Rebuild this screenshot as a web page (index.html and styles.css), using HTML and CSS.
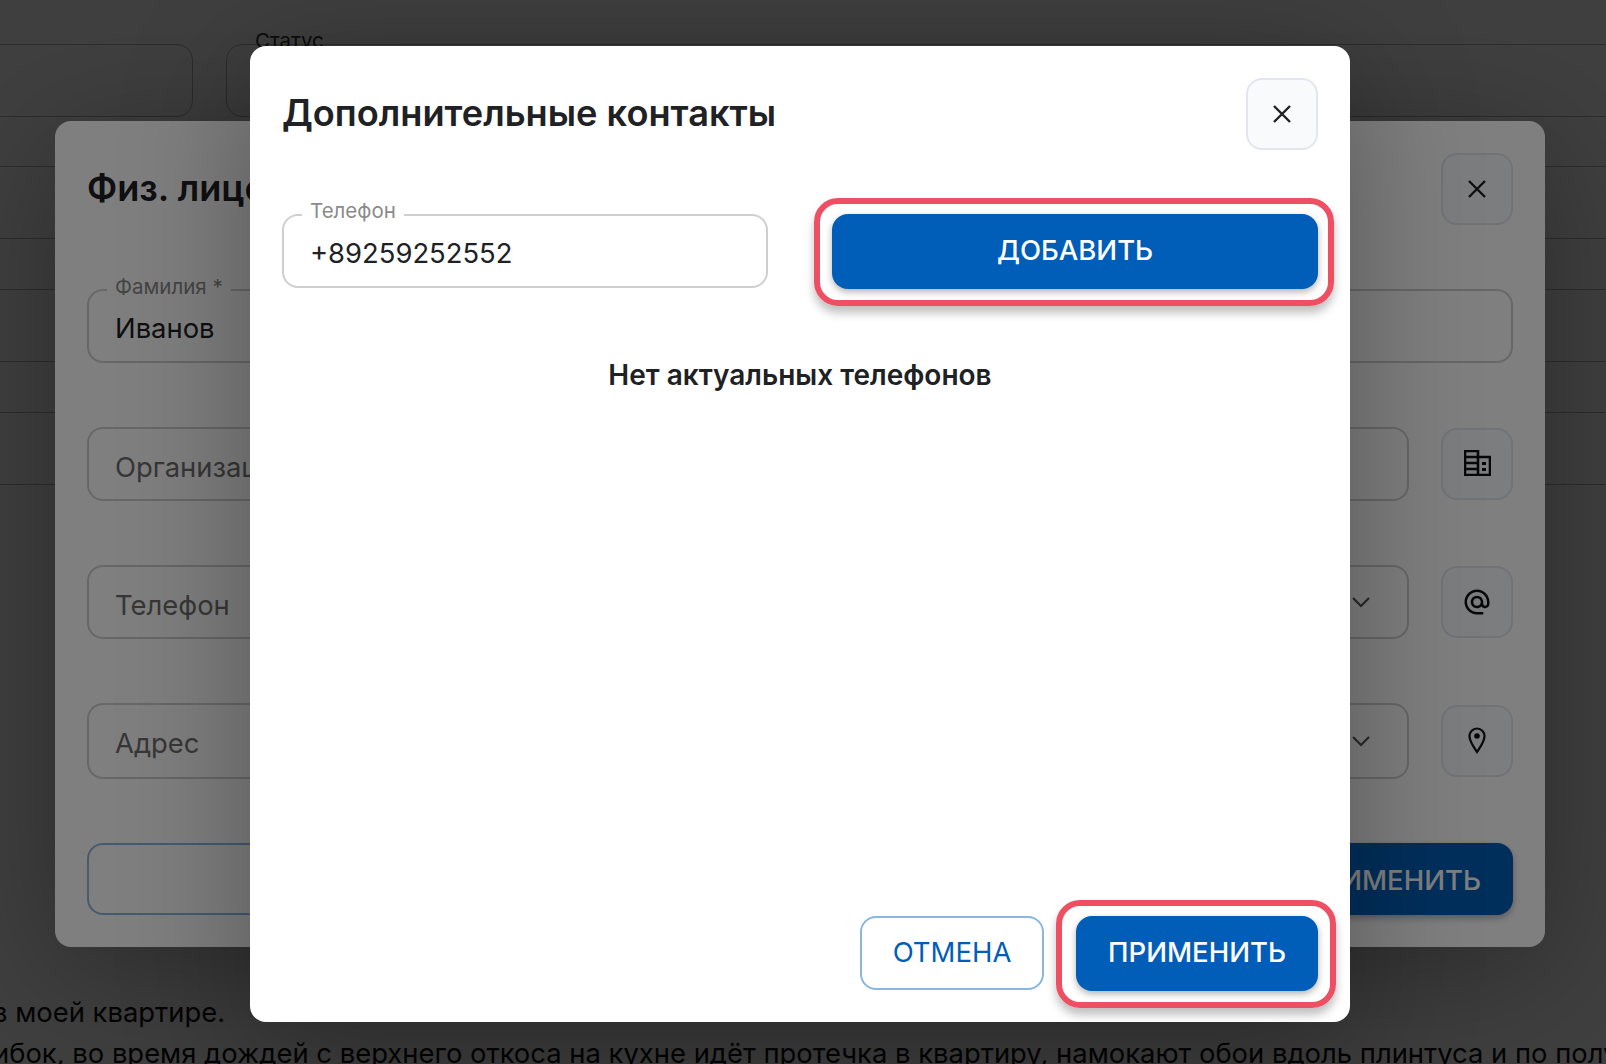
FILE: index.html
```html
<!DOCTYPE html>
<html lang="ru">
<head>
<meta charset="utf-8">
<title>Дополнительные контакты</title>
<link rel="stylesheet" href="styles.css">
</head>
<body>
<div class="page">
  <div class="page-fields">
    <div class="page-field page-field--first"></div>
    <div class="page-field page-field--status"><span class="page-label">Статус</span></div>
  </div>
  <div class="page-rows">
    <div class="page-row page-row--tall"></div>
    <div class="page-row page-row--short"></div>
    <div class="page-row page-row--tall"></div>
    <div class="page-row page-row--short"></div>
    <div class="page-row page-row--tall"></div>
    <div class="page-row page-row--mid"></div>
    <div class="page-row page-row--last"></div>
  </div>
  <div class="page-text">
    <p class="page-line page-line--one">в моей квартире.</p>
    <p class="page-line page-line--two">ибок, во время дождей с верхнего откоса на кухне идёт протечка в квартиру, намокают обои вдоль плинтуса и по полу</p>
  </div>
</div>

<div class="scrim"></div>

<section class="dialog dialog--back">
  <header class="dialog-head">
    <h2 class="dialog-title">Физ. лицо</h2>
    <button class="square-btn">
      <svg class="icon-close" viewBox="0 0 20 20"><path d="M2 2l16 16M18 2L2 18"/></svg>
    </button>
  </header>
  <div class="back-form">
    <div class="field field--solo"><span class="field-label field-label--low">Фамилия *</span><span class="field-value">Иванов</span></div>
    <div class="back-row">
      <div class="field"><span class="field-hint">Организация</span></div>
      <button class="square-btn">
        <svg class="icon-building" viewBox="0 0 27 26"><path d="M1 1h13v24H1zM14 7h12v18H14zM1 7h13M1 13h13M1 19h13"/><path class="icon-dots" d="M18 12h4v3h-4zM18 18h4v3h-4z"/></svg>
      </button>
    </div>
    <div class="back-row">
      <div class="field field--select"><span class="field-hint">Телефон</span>
        <svg class="icon-chevron" viewBox="0 0 20 12"><path d="M2 2l8 8 8-8"/></svg>
      </div>
      <button class="square-btn">
        <svg class="icon-at" viewBox="0 0 24 24"><path d="M12 2C6.48 2 2 6.48 2 12s4.48 10 10 10h5v-2h-5c-4.34 0-8-3.66-8-8s3.66-8 8-8 8 3.66 8 8v1.43c0 .79-.71 1.57-1.5 1.57s-1.5-.78-1.5-1.57V12c0-2.76-2.24-5-5-5s-5 2.24-5 5 2.24 5 5 5c1.38 0 2.64-.56 3.54-1.47.65.89 1.77 1.47 2.96 1.47 1.97 0 3.5-1.6 3.5-3.57V12c0-5.52-4.48-10-10-10zm0 13c-1.66 0-3-1.34-3-3s1.34-3 3-3 3 1.34 3 3-1.34 3-3 3z"/></svg>
      </button>
    </div>
    <div class="back-row">
      <div class="field field--select field--address"><span class="field-hint">Адрес</span>
        <svg class="icon-chevron" viewBox="0 0 20 12"><path d="M2 2l8 8 8-8"/></svg>
      </div>
      <button class="square-btn">
        <svg class="icon-pin" viewBox="0 0 18 28"><path d="M9 26C5 20 1.500 15.500 1.500 10a7.500 7.500 0 0 1 15 0C16.500 15.500 13 20 9 26z"/><circle cx="9" cy="10" r="2.800"/></svg>
      </button>
    </div>
  </div>
  <footer class="back-actions">
    <button class="btn btn--outline">ОТМЕНА</button>
    <button class="btn btn--solid btn--back-apply">ПРИМЕНИТЬ</button>
  </footer>
</section>

<div class="scrim"></div>

<section class="dialog dialog--front">
  <header class="dialog-head">
    <h2 class="dialog-title">Дополнительные контакты</h2>
    <button class="square-btn">
      <svg class="icon-close" viewBox="0 0 20 20"><path d="M2 2l16 16M18 2L2 18"/></svg>
    </button>
  </header>
  <div class="phone-row">
    <div class="field field--phone"><span class="field-label">Телефон</span><span class="field-value">+89259252552</span></div>
    <div class="callout-wrap callout-wrap--add">
      <button class="btn btn--solid btn--wide">ДОБАВИТЬ</button>
      <div class="callout callout--add"></div>
    </div>
  </div>
  <p class="empty">Нет актуальных телефонов</p>
  <footer class="front-actions">
    <button class="btn btn--outline btn--cancel">ОТМЕНА</button>
    <div class="callout-wrap">
      <button class="btn btn--solid btn--apply">ПРИМЕНИТЬ</button>
      <div class="callout callout--apply"></div>
    </div>
  </footer>
</section>
</body>
</html>
```
FILE: styles.css
```css
* { box-sizing: border-box; }
html, body { margin: 0; height: 100%; }
body {
  position: relative;
  width: 1606px;
  height: 1064px;
  overflow: hidden;
  background: #fff;
  font-family: Inter, "Noto Sans", sans-serif;
  color: #202124;
}
button { font-family: inherit; cursor: pointer; }

/* underlying page */
.page { height: 100%; padding-top: 44px; overflow: hidden; }
.page-fields { display: flex; gap: 33px; margin: 0 -60px 0 -40px; }
.page-field { position: relative; height: 73px; border: 1.5px solid #b4b4b4; border-radius: 16px; }
.page-field--first { width: 233px; }
.page-field--status { flex: 1; }
.page-label { position: absolute; left: 28px; top: -17px; font-size: 20.5px; line-height: 26px; color: #333; }
.page-rows { margin-top: 49px; }
.page-row { border-top: 1.5px solid #b4b4b4; }
.page-row--tall { height: 72px; }
.page-row--short { height: 51px; }
.page-row--mid { height: 114px; }
.page-row--last { height: 394px; border-top: none; }
.page-text { font-size: 27.4px; line-height: 41px; color: #111; white-space: nowrap; }
.page-line { margin: 0; }
.page-line--one { margin-left: -8px; }
.page-line--two { margin-left: -7px; }

.scrim { position: absolute; inset: 0; background: rgba(0, 0, 0, .5); }

/* dialogs */
.dialog {
  position: absolute;
  display: flex;
  flex-direction: column;
  background: #fff;
  border-radius: 16px;
  overflow: hidden;
  box-shadow: 0 24px 130px rgba(0, 0, 0, .32);
}
.dialog--back { left: 55px; top: 121px; width: 1490px; height: 826px; padding: 33px 32px 32px; }
.dialog--front { left: 250px; top: 46px; width: 1100px; height: 976px; padding: 33px 32px 32px; }
.dialog-head { display: flex; justify-content: space-between; align-items: center; height: 70px; flex: none; }
.dialog-title { margin: 0 0 2px; font-size: 36.2px; line-height: 44px; font-weight: 600; color: #202124; }

.square-btn {
  display: flex;
  align-items: center;
  justify-content: center;
  flex: none;
  width: 72px;
  height: 72px;
  padding: 0;
  background: #f9fafc;
  border: 2px solid #e3e6ee;
  border-radius: 16px;
}
.icon-close { width: 20px; height: 20px; fill: none; stroke: #202124; stroke-width: 2.4; }
.icon-building { width: 27px; height: 26px; margin-bottom: 3px; fill: none; stroke: #111; stroke-width: 2.6; }
.icon-dots { fill: #111; stroke: none; }
.icon-at { width: 30px; height: 30px; fill: #111; }
.icon-pin { width: 18px; height: 28px; margin-bottom: 2px; fill: none; stroke: #111; stroke-width: 2.2; }
.icon-pin circle { fill: #111; stroke: none; }
.icon-chevron { width: 20px; height: 12px; fill: none; stroke: #555; stroke-width: 2.2; flex: none; }

/* fields */
.field {
  position: relative;
  display: flex;
  align-items: center;
  height: 74px;
  padding: 0 26px;
  background: #fff;
  border: 2px solid #cfcfcf;
  border-radius: 16px;
  flex: 1;
}
.field--solo { flex: none; }
.field-label {
  position: absolute;
  left: 18px;
  top: -18px;
  padding: 0 8px;
  background: #fff;
  font-size: 20.5px;
  line-height: 26px;
  color: #8b8b8b;
}
.field-label--low { top: -17px; }
.field-value { margin-top: 4px; font-size: 27.4px; line-height: 36px; color: #202124; }
.field-hint { margin-top: 5px; font-size: 27.4px; line-height: 36px; color: #6f6f6f; flex: 1; }
.field--select { padding-right: 36px; }
.field--address { height: 76px; }
.field--address .field-hint { margin-top: 3px; }
.field--phone { flex: none; width: 486px; }

.back-form { display: flex; flex-direction: column; margin-top: 65px; gap: 64px; }
.back-row { display: flex; align-items: center; gap: 32px; }
.back-actions { display: grid; grid-template-columns: 1fr auto; align-items: end; gap: 32px; margin-top: auto; }

/* buttons */
.btn {
  display: block;
  height: 74px;
  padding: 0 0 2px;
  border-radius: 16px;
  font-size: 27.5px;
  font-weight: 500;
  line-height: 36px;
}
.btn--solid {
  height: 75px;
  padding-bottom: 3px;
  background: #005eb8;
  border: none;
  color: #fff;
  box-shadow: 0 3px 7px rgba(0, 0, 0, .3);
}
.btn--outline { background: #fff; border: 2px solid #8ab6e2; color: #005eb8; font-weight: 400; }
.back-actions .btn { height: 72px; padding: 1px 0 0; }
.btn--back-apply { width: 242px; }
.btn--wide { width: 100%; }
.btn--cancel { width: 184px; align-self: flex-start; }
.btn--apply { width: 242px; }

.phone-row { display: flex; gap: 64px; margin-top: 65px; flex: none; }
.callout-wrap { position: relative; }
.callout-wrap--add { flex: 1; }
.callout {
  position: absolute;
  border: 6px solid #ef4f63;
  border-radius: 24px;
  box-shadow: 0 7px 10px rgba(0, 0, 0, .25);
  pointer-events: none;
}
.callout--add { inset: -16px -16px -17px -18px; }
.callout--apply { inset: -16px -18px -17px -20px; }

.empty { margin: 68px 0 0; text-align: center; font-size: 28px; line-height: 36px; font-weight: 600; color: #202124; }
.front-actions { display: flex; justify-content: flex-end; align-items: flex-start; gap: 32px; margin-top: auto; height: 74px; }
```
